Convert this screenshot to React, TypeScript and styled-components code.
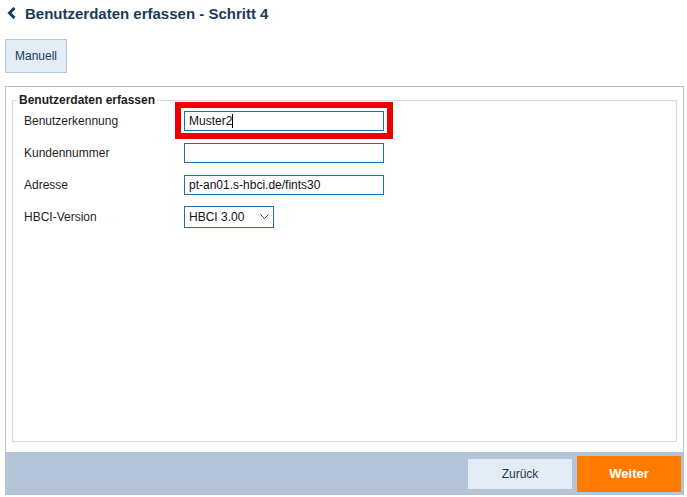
import styled, { createGlobalStyle } from "styled-components";

const GlobalStyle = createGlobalStyle`
  html, body {
    margin: 0;
    padding: 0;
    background: #ffffff;
    font-family: "Liberation Sans", Arial, sans-serif;
  }
`;

const Page = styled.div`
  width: 687px;
  height: 497px;
  box-sizing: border-box;
  padding: 3px 3px 2px 5px;
  display: flex;
  flex-direction: column;
`;

const Header = styled.header`
  display: flex;
  align-items: center;
  gap: 8px;
  height: 20px;
  padding-left: 1px;
  color: #1b3a57;
`;

const Title = styled.h1`
  margin: 0;
  font-size: 15px;
  font-weight: bold;
  color: #1b3a57;
`;

const ModeButton = styled.button`
  align-self: flex-start;
  margin-top: 16px;
  width: 62px;
  height: 34px;
  background: #e3ebf5;
  border: 1px solid #b5c7dc;
  font-family: inherit;
  font-size: 12px;
  color: #1b3a57;
  padding: 0;
`;

const Panel = styled.section`
  margin-top: 13px;
  flex: 1;
  border: 1px solid #b4c6da;
  border-bottom: none;
  display: flex;
  flex-direction: column;
`;

const Fieldset = styled.fieldset`
  flex: 1;
  margin: 6px 6px 10px 6px;
  padding: 4px 11px 10px 11px;
  border: 1px solid #d9d9d9;
`;

const Legend = styled.legend`
  margin-left: -7px;
  padding: 0 2px;
  font-size: 12px;
  line-height: 14px;
  font-weight: bold;
  color: #1e1e1e;
`;

const Form = styled.div`
  display: grid;
  grid-template-columns: 160px auto;
  grid-auto-rows: 20px;
  row-gap: 12px;
  align-items: center;
  justify-items: start;
`;

const Label = styled.label`
  font-size: 12px;
  color: #1e1e1e;
`;

const FieldWrap = styled.div<{ $marked?: boolean }>`
  position: relative;
  display: flex;
  ${(p) =>
    p.$marked &&
    `
    &::after {
      content: "";
      position: absolute;
      left: -9px;
      right: -9px;
      top: -9px;
      bottom: -8px;
      border: 6px solid #ee0000;
      pointer-events: none;
    }
  `}
`;

const TextInput = styled.input`
  width: 200px;
  height: 20px;
  box-sizing: border-box;
  border: 1px solid #1f6fa9;
  padding: 0 4px;
  font-family: inherit;
  font-size: 12px;
  color: #111;
  outline: none;
  border-radius: 0;
`;

const Caret = styled.span`
  position: absolute;
  left: 48px;
  top: 3px;
  width: 1px;
  height: 14px;
  background: #000;
`;

const Select = styled.select`
  width: 90px;
  height: 22px;
  box-sizing: border-box;
  border: 1px solid #1f6fa9;
  border-radius: 0;
  padding: 0 4px;
  appearance: none;
  background: #fff;
  font-family: inherit;
  font-size: 12px;
  color: #111;
  outline: none;
`;

const SelectArrow = styled.svg`
  position: absolute;
  right: 5px;
  top: 8px;
  pointer-events: none;
`;

const Footer = styled.footer`
  height: 43px;
  background: #b4c5da;
  display: flex;
  justify-content: flex-end;
  align-items: center;
  gap: 5px;
  padding-right: 2px;
`;

const FooterButton = styled.button<{ $primary?: boolean }>`
  width: 104px;
  height: ${(p) => (p.$primary ? "36px" : "30px")};
  border: none;
  padding: 0;
  font-family: inherit;
  font-size: ${(p) => (p.$primary ? "13px" : "12px")};
  font-weight: ${(p) => (p.$primary ? "bold" : "normal")};
  background: ${(p) => (p.$primary ? "#ff7a00" : "#e3ebf5")};
  color: ${(p) => (p.$primary ? "#ffffff" : "#1b3a57")};
`;

const App = () => {
  return (
    <Page>
      <GlobalStyle />
      <Header>
        <svg width="11" height="12" viewBox="0 0 11 12">
          <path d="M8.5 1 L3.5 6 L8.5 11" fill="none" stroke="#1b3a57" strokeWidth="3" />
        </svg>
        <Title>Benutzerdaten erfassen - Schritt 4</Title>
      </Header>
      <ModeButton>Manuell</ModeButton>
      <Panel>
        <Fieldset>
          <Legend>Benutzerdaten erfassen</Legend>
          <Form>
            <Label>Benutzerkennung</Label>
            <FieldWrap $marked>
              <TextInput defaultValue="Muster2" />
              <Caret />
            </FieldWrap>
            <Label>Kundennummer</Label>
            <FieldWrap>
              <TextInput defaultValue="" />
            </FieldWrap>
            <Label>Adresse</Label>
            <FieldWrap>
              <TextInput defaultValue="pt-an01.s-hbci.de/fints30" />
            </FieldWrap>
            <Label>HBCI-Version</Label>
            <FieldWrap>
              <Select defaultValue="3.00">
                <option value="3.00">HBCI 3.00</option>
              </Select>
              <SelectArrow width="9" height="6" viewBox="0 0 9 6">
                <path d="M0.5 0.5 L4.5 4.5 L8.5 0.5" fill="none" stroke="#444" strokeWidth="1" />
              </SelectArrow>
            </FieldWrap>
          </Form>
        </Fieldset>
        <Footer>
          <FooterButton>Zurück</FooterButton>
          <FooterButton $primary>Weiter</FooterButton>
        </Footer>
      </Panel>
    </Page>
  );
};

export default App;
